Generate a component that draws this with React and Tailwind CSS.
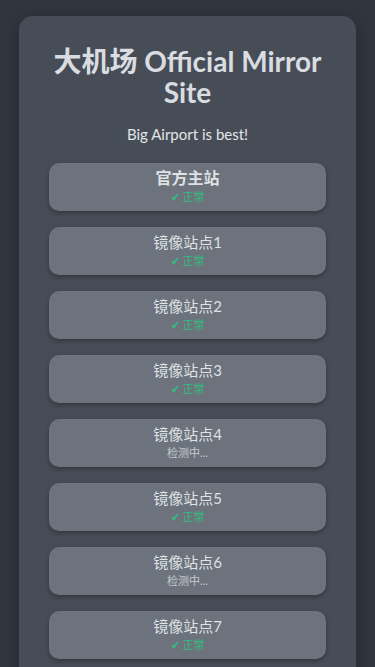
const mirrors = [
  { name: '官方主站', status: 'ok', main: true },
  { name: '镜像站点1', status: 'ok' },
  { name: '镜像站点2', status: 'ok' },
  { name: '镜像站点3', status: 'ok' },
  { name: '镜像站点4', status: 'checking' },
  { name: '镜像站点5', status: 'ok' },
  { name: '镜像站点6', status: 'checking' },
  { name: '镜像站点7', status: 'ok' },
]

const App = () => {
  return (
    <div
      className="min-h-screen bg-[#30363e] px-[19px] pt-4 pb-10"
      style={{ fontFamily: 'Lato, "Noto Sans CJK SC", sans-serif' }}
    >
      <div className="rounded-[14px] bg-[#474d56] px-[30px] pt-[30px] pb-8 shadow-[0_4px_16px_rgba(0,0,0,0.25)]">
        <h1 className="text-center text-[28px] font-bold leading-[31px] text-[#d9dce0]">
          大机场 Official Mirror Site
        </h1>
        <p className="mt-[15px] text-center text-[15px] text-[#e3e5e8]">Big Airport is best!</p>

        <div className="mt-[17px] flex flex-col gap-4">
          {mirrors.map((m) => (
            <a
              key={m.name}
              href="#"
              className="flex h-[48px] flex-col items-center justify-center rounded-[10px] bg-[#6c737c] shadow-[0_2px_5px_rgba(0,0,0,0.3)]"
            >
              <div
                className={`leading-5 text-[#dfe1e4] ${m.main ? 'text-[16px] font-bold' : 'text-[15px]'}`}
              >
                {m.name}
              </div>
              {m.status === 'ok' ? (
                <div className="mt-[1px] text-[11px] leading-4 text-[#2fbf7f]">✔ 正常</div>
              ) : (
                <div className="mt-[1px] text-[11px] leading-4 text-[#c5c8cc]">检测中...</div>
              )}
            </a>
          ))}
        </div>
      </div>
    </div>
  )
}

export default App
